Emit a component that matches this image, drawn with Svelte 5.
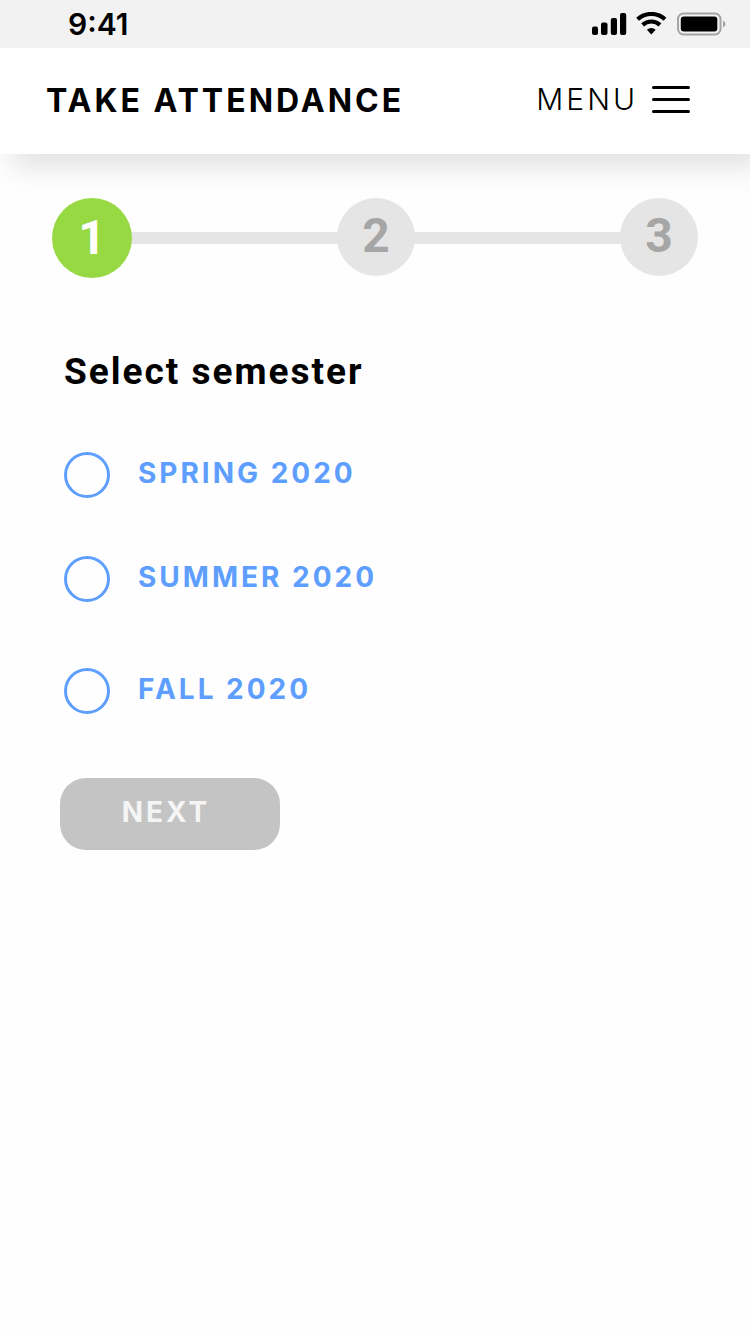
<script>
    const steps = [1, 2, 3];
    const semesters = ["Spring 2020", "Summer 2020", "Fall 2020"];

    let current = 1;
    let selected = "";
</script>

<div class="status">
    <time>9:41</time>
    <svg width="134" height="24" viewBox="0 0 134 24" role="img" aria-label="Signal, Wi-Fi and battery">
        <rect x="0" y="14.500" width="6" height="8.500" rx="2" />
        <rect x="9" y="10.500" width="6.500" height="12.500" rx="2" />
        <rect x="18.800" y="6" width="6.200" height="17" rx="2" />
        <rect x="28" y="1" width="6.200" height="22" rx="2" />
        <path d="M45.600 7.200C53.400 0.200 65.200 0.200 73 7.200" fill="none" stroke="#000" stroke-width="4.200" />
        <path d="M50.600 12.800C55.600 8.400 63 8.400 68 12.800" fill="none" stroke="#000" stroke-width="4.200" />
        <path d="M54.900 17.800Q59.300 14.400 63.700 17.800L59.300 22.600Z" />
        <rect x="86" y="1.500" width="42.500" height="21" rx="5.500" fill="none" stroke="#a4a4a4" stroke-width="2" />
        <rect x="88.800" y="4.500" width="36.500" height="15" rx="3" />
        <path d="M131 8.500Q133.500 9.500 133.500 12T131 15.500Z" fill="#a4a4a4" />
    </svg>
</div>

<header>
    <h1>Take attendance</h1>
    <button type="button" class="menu">
        Menu
        <svg width="38" height="27" viewBox="0 0 38 27" aria-hidden="true">
            <path d="M1.500 1.500H36.500M1.500 13.500H36.500M1.500 25.500H36.500" fill="none" stroke="#000" stroke-width="3" stroke-linecap="round" />
        </svg>
    </button>
</header>

<main>
    <ol>
        {#each steps as step}
            <li>
                <span class="step" class:active={step === current} aria-current={step === current ? "step" : undefined}>
                    {step}
                </span>
            </li>
        {/each}
    </ol>

    <form on:submit|preventDefault>
        <fieldset>
            <legend>Select semester</legend>
            {#each semesters as semester}
                <label>
                    <input type="radio" name="semester" value={semester} bind:group={selected} />
                    <span>{semester}</span>
                </label>
            {/each}
        </fieldset>
        <button type="submit" class="next" class:ready={selected} disabled={!selected}>Next</button>
    </form>
</main>

<style>
    :global(body) {
        background-color: #fefefe;
        color: #000;
        font-family: Inter, "Liberation Sans", sans-serif;
        margin: 0;
    }

    .status {
        align-items: center;
        background-color: #f2f2f2;
        display: flex;
        height: 48px;
        justify-content: space-between;
        padding: 0 24px 0 68px;
        position: relative;
        z-index: 1;
    }

    time {
        font-size: 30px;
        font-weight: 600;
        line-height: 48px;
    }

    header {
        align-items: center;
        background-color: #fff;
        box-shadow: 12px 12px 28px rgba(0, 0, 0, 0.12);
        display: flex;
        height: 106px;
        justify-content: space-between;
        padding: 0 60px 0 46px;
    }

    h1 {
        font-size: 32px;
        font-weight: 700;
        letter-spacing: 3px;
        line-height: 40px;
        margin: 0;
        text-transform: uppercase;
    }

    button {
        border: 0;
        cursor: pointer;
        font-family: inherit;
        text-transform: uppercase;
    }

    .menu {
        align-items: center;
        background: none;
        color: inherit;
        display: flex;
        font-size: 30px;
        font-weight: 300;
        gap: 14px;
        letter-spacing: 3px;
        line-height: 40px;
        padding: 0 0 4px;
    }

    ol {
        display: flex;
        list-style: none;
        margin: 0;
        padding: 44px 52px 0;
    }

    li {
        align-items: flex-start;
        display: flex;
    }

    li + li {
        flex: 1;
    }

    li + li::before {
        background-color: #e5e5e5;
        content: "";
        flex: 1;
        height: 12px;
        margin: 34px -2px 0;
    }

    .step {
        background-color: #e5e5e5;
        border-radius: 50%;
        color: #a6a6a6;
        font-family: Roboto, "Liberation Sans", sans-serif;
        font-size: 48px;
        font-weight: 700;
        height: 78px;
        line-height: 76px;
        position: relative;
        text-align: center;
        width: 78px;
        z-index: 1;
    }

    .step.active {
        background-color: #96d943;
        color: #fff;
        height: 80px;
        line-height: 80px;
        width: 80px;
    }

    form {
        padding: 72px 60px;
    }

    fieldset {
        border: 0;
        margin: 0;
        min-width: 0;
        padding: 0 4px;
    }

    legend {
        font-family: Roboto, "Liberation Sans", sans-serif;
        font-size: 37px;
        font-weight: 700;
        letter-spacing: 2px;
        line-height: 44px;
        margin-bottom: 58px;
        padding: 0;
    }

    label {
        align-items: center;
        color: #5e9eff;
        display: flex;
        font-size: 28px;
        font-weight: 700;
        gap: 28px;
        letter-spacing: 3px;
        line-height: 40px;
        margin-bottom: 58px;
        text-transform: uppercase;
    }

    label:last-of-type {
        margin: 66px 0 64px;
    }

    label span {
        padding-bottom: 4px;
    }

    input {
        appearance: none;
        border: 3px solid #5e9eff;
        border-radius: 50%;
        box-sizing: border-box;
        height: 46px;
        margin: 0;
        width: 46px;
    }

    input:checked {
        background-color: #5e9eff;
        box-shadow: inset 0 0 0 6px #fff;
    }

    .next {
        background-color: #c4c4c4;
        border-radius: 26px;
        color: #f5f5f5;
        font-size: 28px;
        font-weight: 700;
        height: 72px;
        letter-spacing: 3px;
        padding: 0 8px 4px 0;
        width: 220px;
    }

    .next.ready {
        background-color: #5e9eff;
    }

    .next:disabled {
        cursor: default;
    }
</style>
